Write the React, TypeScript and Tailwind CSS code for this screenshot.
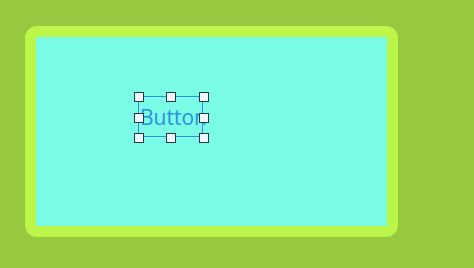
const handles = [
  "left-[-5px] top-[-5px]",
  "left-[27px] top-[-5px]",
  "left-[60px] top-[-5px]",
  "left-[-5px] top-[16px]",
  "left-[60px] top-[16px]",
  "left-[-5px] top-[36px]",
  "left-[27px] top-[36px]",
  "left-[60px] top-[36px]",
];

export default function App() {
  return (
    <div className="h-[268px] w-[474px] overflow-hidden bg-[#96c93f] pl-[25px] pt-[26px]">
      <div className="h-[211px] w-[373px] rounded-[12px] border-[11px] border-[#bdf64a] bg-[#7afce6]">
        <div className="pl-[102px] pt-[59px]">
          <div className="relative h-[41px] w-[65px] border-[1.5px] border-[#2f8fd8]">
            <span className="block pl-[1px] pt-[6px] font-['Open_Sans',sans-serif] text-[21px] leading-[28px] whitespace-nowrap text-[#2e8fe0]">
              Button
            </span>
            {handles.map((h) => (
              <div
                key={h}
                className={`absolute ${h} h-[10px] w-[10px] border-[1.5px] border-[#1f3a44] bg-[#eef6ff]`}
              />
            ))}
          </div>
        </div>
      </div>
    </div>
  );
}
